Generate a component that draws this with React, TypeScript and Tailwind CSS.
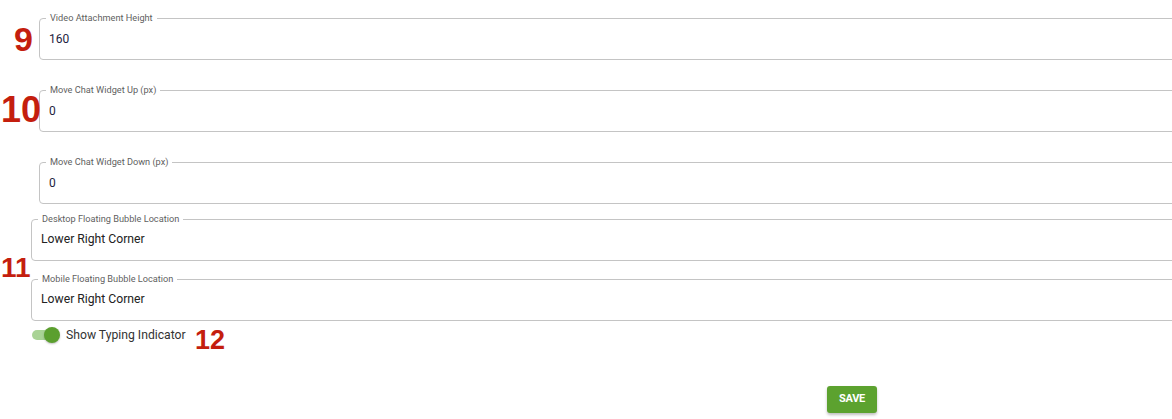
import React from 'react';

type FieldProps = {
  label: string;
  value: string;
  indent: string;
  gap: string;
  valueClass?: string;
};

function OutlinedField({ label, value, indent, gap, valueClass }: FieldProps) {
  return (
    <div className={`${indent} ${gap} -mr-[20px]`}>
      <div className="relative h-[42px] border border-[#c4c4c4] rounded-[4px]">
        <span className="absolute left-[6px] -top-[7px] px-[4px] bg-white text-[9.2px] leading-[12px] text-[#5f5f5f] whitespace-nowrap">
          {label}
        </span>
        <div className={`flex items-center h-full pl-[9px] pb-[1px] ${valueClass ?? 'text-[12px] text-[#1d2340]'}`}>
          {value}
        </div>
      </div>
    </div>
  );
}

export default function App() {
  return (
    <div
      className="relative w-[1172px] h-[419px] overflow-hidden bg-white"
      style={{ fontFamily: 'Roboto, "Liberation Sans", Arial, sans-serif' }}
    >
      <div className="flex flex-col pt-[18px]">
        <OutlinedField label="Video Attachment Height" value="160" indent="ml-[39px]" gap="mt-0" />
        <OutlinedField label="Move Chat Widget Up (px)" value="0" indent="ml-[39px]" gap="mt-[30px]" />
        <OutlinedField label="Move Chat Widget Down (px)" value="0" indent="ml-[39px]" gap="mt-[30px]" />
        <OutlinedField
          label="Desktop Floating Bubble Location"
          value="Lower Right Corner"
          indent="ml-[31px]"
          gap="mt-[15px]"
          valueClass="text-[12.2px] text-[#222]"
        />
        <OutlinedField
          label="Mobile Floating Bubble Location"
          value="Lower Right Corner"
          indent="ml-[31px]"
          gap="mt-[18px]"
          valueClass="text-[12.2px] text-[#222]"
        />

        <div className="flex items-center ml-[32px] mt-[6px] h-[16px]">
          <div className="relative w-[28px] h-[16px] flex items-center">
            <div className="w-[26px] h-[10px] rounded-full bg-[#a9d395]" />
            <div className="absolute right-0 top-0 w-[16px] h-[16px] rounded-full bg-[#5b9f2e] shadow-[0_1px_2px_rgba(0,0,0,0.25)]" />
          </div>
          <span className="ml-[6px] text-[12.2px] text-[#333] leading-none">Show Typing Indicator</span>
        </div>

        <div className="mt-[42px] pl-[827px]">
          <button className="w-[50px] h-[27px] rounded-[3px] bg-[#5ca22f] text-white text-[11px] font-bold shadow-[0_2px_3px_rgba(0,0,0,0.25)] tracking-tight">
            SAVE
          </button>
        </div>
      </div>

      <span
        className="absolute left-[14px] top-[22px] text-[34px] leading-none font-bold text-[#c41e0e]"
        style={{ fontFamily: '"Liberation Sans", Arial, sans-serif' }}
      >
        9
      </span>
      <span
        className="absolute left-[1px] top-[92px] text-[36px] leading-none font-bold text-[#c41e0e]"
        style={{ fontFamily: '"Liberation Sans", Arial, sans-serif' }}
      >
        10
      </span>
      <span
        className="absolute left-[1px] top-[254px] text-[28px] leading-none font-bold text-[#c41e0e]"
        style={{ fontFamily: '"Liberation Sans", Arial, sans-serif' }}
      >
        11
      </span>
      <span
        className="absolute left-[195px] top-[327px] text-[27px] leading-none font-bold text-[#c41e0e]"
        style={{ fontFamily: '"Liberation Sans", Arial, sans-serif' }}
      >
        12
      </span>
    </div>
  );
}
